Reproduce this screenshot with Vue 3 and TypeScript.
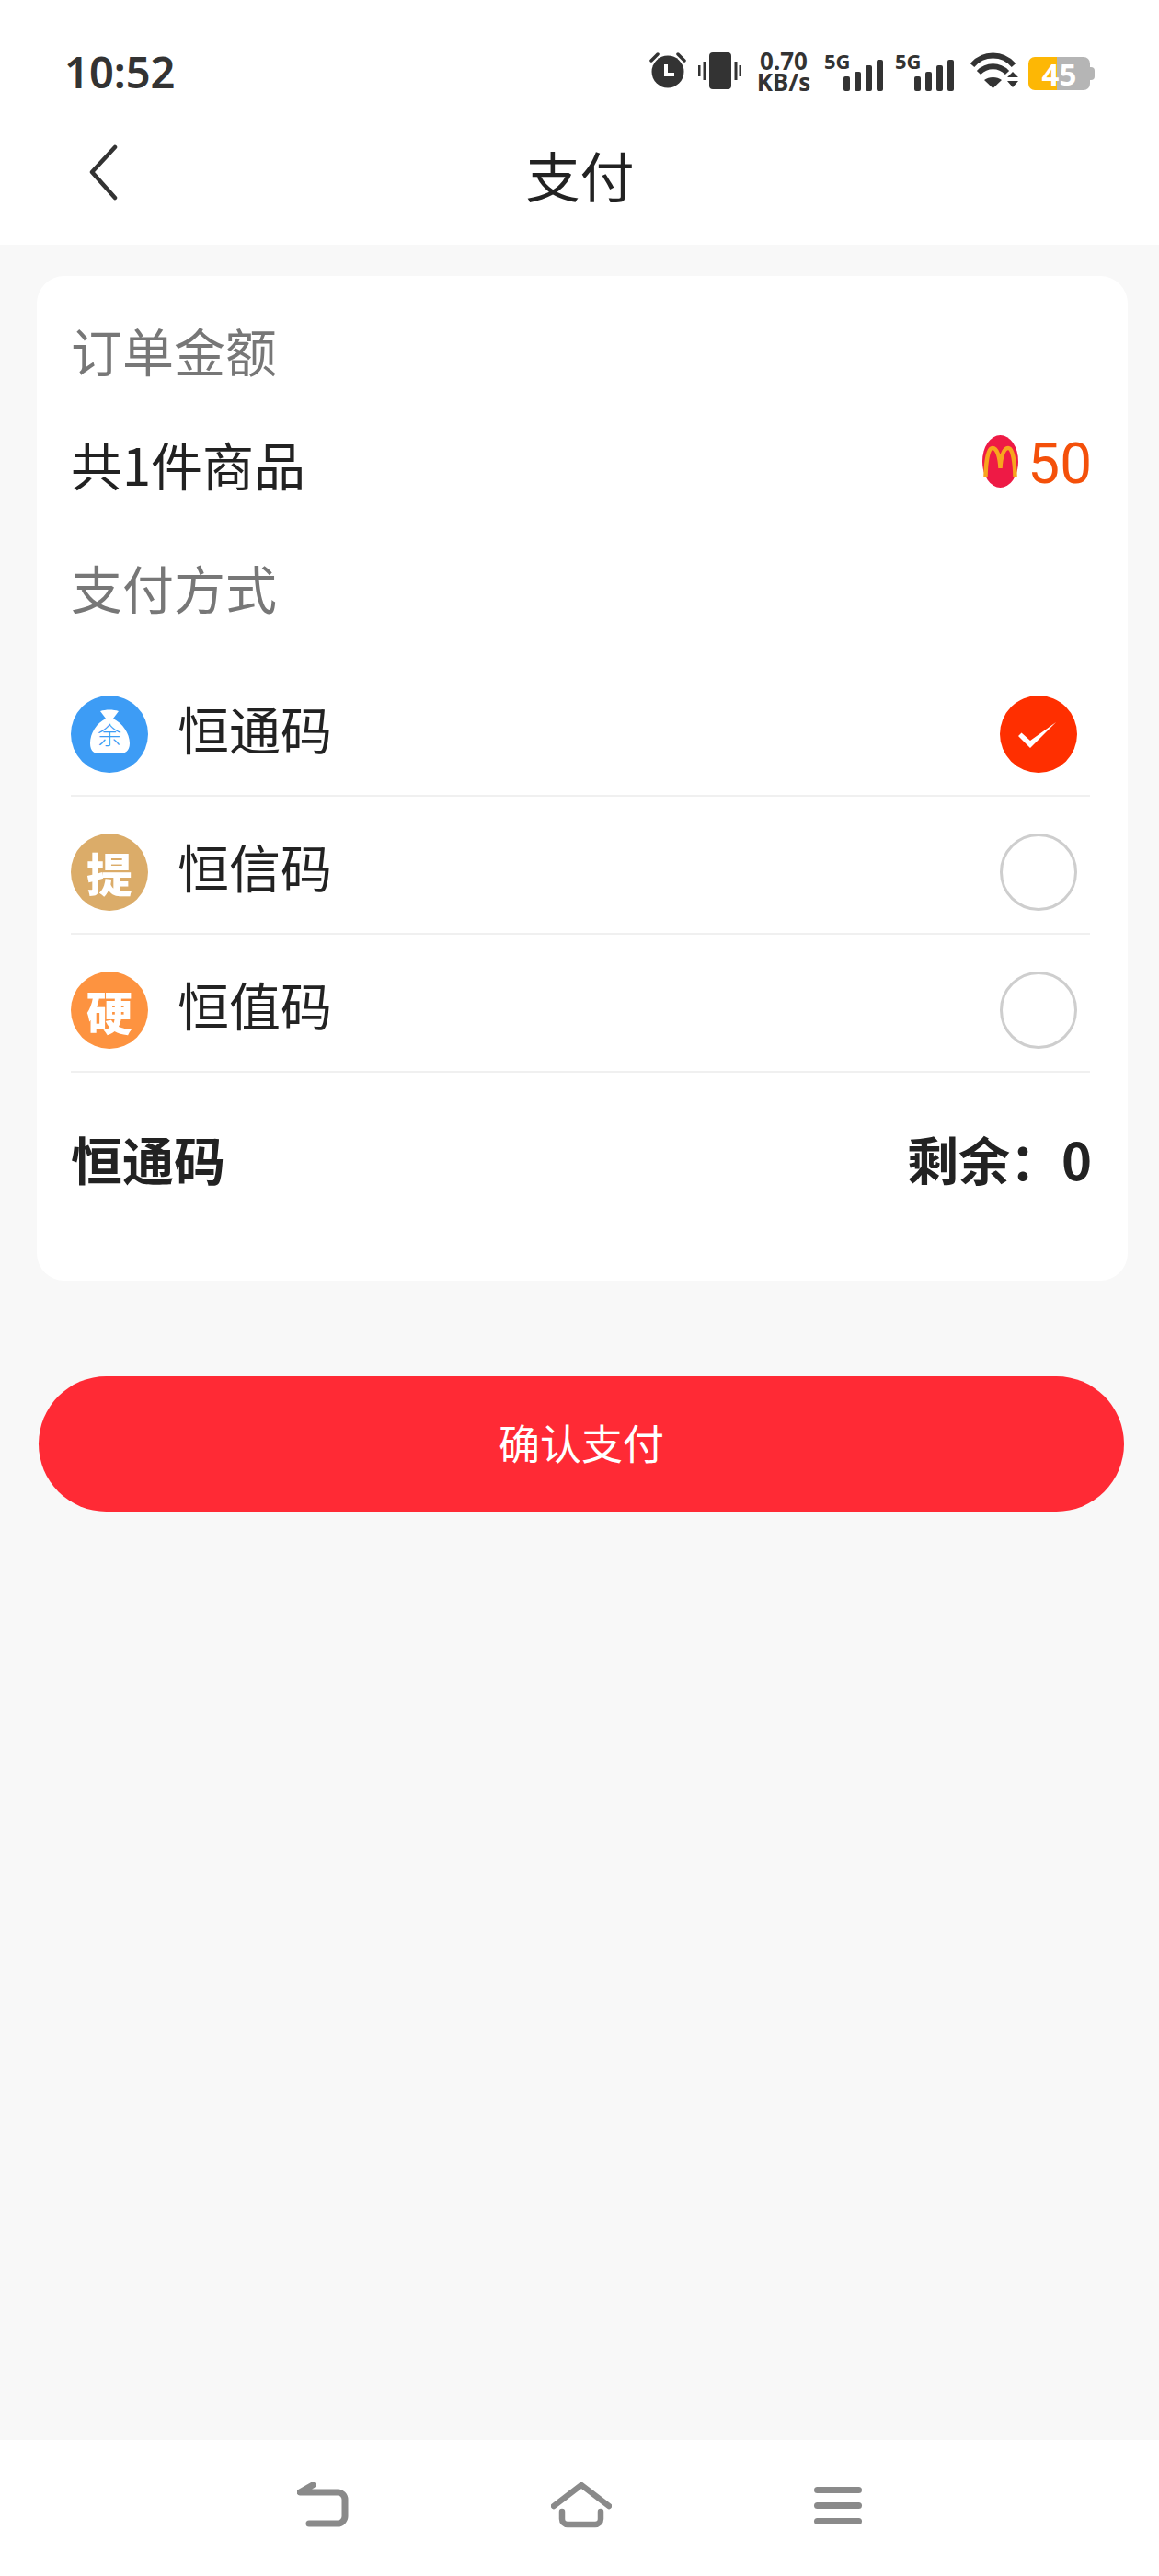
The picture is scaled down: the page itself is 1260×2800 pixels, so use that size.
<template>
  <div class="page">
    <header class="top">
      <div class="status">
        <span class="time">10:52</span>
        <div class="status-icons">
          <svg class="ic-alarm" width="40" height="39" viewBox="0 0 40 39">
            <circle cx="20" cy="21" r="17.5" fill="#333" />
            <path d="M2 9 9 2M38 9 31 2" stroke="#333" stroke-width="3.5" stroke-linecap="round" />
            <path d="M18 13v11h9" fill="none" stroke="#fff" stroke-width="4" />
          </svg>
          <svg class="ic-vibrate" width="47" height="40" viewBox="0 0 47 40">
            <rect x="12" y="0" width="24" height="40" rx="4" fill="#333" />
            <path d="M1 14v12M7 10v20M41 10v20M46 14v12" stroke="#333" stroke-width="3" />
          </svg>
          <div class="speed"><span>0.70</span><span>KB/s</span></div>
          <div v-for="n in 2" :key="n" class="signal">
            <span class="signal-label">5G</span>
            <i v-for="h in signalBars" :key="h" class="signal-bar" :style="{ height: h + 'px' }"></i>
          </div>
          <svg class="ic-wifi" width="52" height="39" viewBox="0 0 52 39">
            <path d="M2 14C14 0 35 0 47 14M9 22c9-9 22-9 31 0" fill="none" stroke="#333" stroke-width="6" />
            <path d="M15 30c5-4 14-4 19 0l-9.500 9z" fill="#333" />
            <path d="M46 21l6 6H40zM40 31h12l-6 7z" fill="#333" />
          </svg>
          <div class="battery"><span>45</span></div>
        </div>
      </div>
      <div class="nav-bar">
        <svg class="back" width="32" height="62" viewBox="0 0 32 62">
          <path d="M28 3 3 30l25 28" fill="none" stroke="#333" stroke-width="4.500" stroke-linecap="round" stroke-linejoin="round" />
        </svg>
        <h1>支付</h1>
      </div>
    </header>

    <main class="main">
      <section class="card">
        <div class="label">订单金额</div>
        <div class="order">
          <span>共1件商品</span>
          <span class="price">
            <svg width="39" height="57" viewBox="0 0 39 57">
              <ellipse cx="19.500" cy="28.500" rx="19.500" ry="28.500" fill="#ee1a45" />
              <path d="M3.500 45C4 24 7 14 11 14c5 0 8 10 8.500 22C20 24 23 14 28 14c4 0 7 10 7.500 31" fill="none" stroke="#f7a51e" stroke-width="4.500" />
            </svg>
            <b>50</b>
          </span>
        </div>
        <div class="label label-pay">支付方式</div>
        <ul class="methods">
          <li v-for="m in methods" :key="m.name" class="method">
            <span class="method-icon" :class="m.cls">
              <svg v-if="m.bag" width="84" height="84" viewBox="0 0 84 84">
                <path d="M32 17c6-2 14-2 20 0l-6 8c10 5 18 16 18 27 0 9-6 11-11 11-8-1-14-1-22 0-5 0-10-2-10-11 0-11 7-22 17-27z" fill="#fff" />
                <text x="42" y="53" text-anchor="middle" class="bag-text">余</text>
              </svg>
              <template v-else>{{ m.mark }}</template>
            </span>
            <span class="method-name">{{ m.name }}</span>
            <span v-if="m.checked" class="radio radio-on">
              <svg width="84" height="84" viewBox="0 0 84 84">
                <path d="M20 44l3.500-3.500L33 49l28-20-28 28z" fill="#fff" />
              </svg>
            </span>
            <span v-else class="radio"></span>
          </li>
        </ul>
        <div class="balance">
          <span>恒通码</span>
          <span>剩余：0</span>
        </div>
      </section>
      <button class="pay">确认支付</button>
    </main>

    <footer class="sys-nav">
      <svg width="56" height="50" viewBox="0 0 56 50">
        <path d="M17 3 3 11h41a8 8 0 0 1 8 8v18a8 8 0 0 1-8 8H13" fill="none" stroke="#8a8a8a" stroke-width="7" stroke-linecap="round" stroke-linejoin="round" />
      </svg>
      <svg width="66" height="50" viewBox="0 0 66 50">
        <path d="M3 26 33 3l30 23" fill="none" stroke="#8a8a8a" stroke-width="6.500" stroke-linecap="round" stroke-linejoin="round" />
        <path d="M12 32v8a6 6 0 0 0 6 6h30a6 6 0 0 0 6-6v-8" fill="none" stroke="#8a8a8a" stroke-width="6.500" stroke-linecap="round" />
      </svg>
      <div class="menu"><i></i><i></i><i></i></div>
    </footer>
  </div>
</template>

<script setup lang="ts">
interface PayMethod {
  name: string;
  cls: string;
  mark?: string;
  bag?: boolean;
  checked?: boolean;
}

const signalBars = [16, 21, 28, 34];

const methods: PayMethod[] = [
  { name: '恒通码', cls: 'blue', bag: true, checked: true },
  { name: '恒信码', cls: 'gold', mark: '提' },
  { name: '恒值码', cls: 'orange', mark: '硬' }
];
</script>

<style scoped>
.page {
  min-height: 2800px;
  display: flex;
  flex-direction: column;
  background: #f8f8f8;
  color: #222;
  font-family: "Noto Sans CJK SC", "Noto Sans", sans-serif;
}

.top {
  height: 266px;
  background: #fff;
}

.status {
  display: flex;
  justify-content: space-between;
  align-items: flex-start;
  height: 124px;
  padding: 50px 70px 0 70px;
  box-sizing: border-box;
}

.time {
  font-family: "Noto Sans", sans-serif;
  font-size: 47px;
  font-weight: 600;
  line-height: 56px;
  color: #333;
}

.status-icons {
  display: flex;
  align-items: flex-start;
  padding-top: 7px;
}

.ic-vibrate { margin-left: 13px; }
.ic-wifi { margin-left: 18px; }

.speed {
  display: flex;
  flex-direction: column;
  align-items: center;
  margin: -2px 0 0 19px;
  width: 54px;
  font-size: 26px;
  font-weight: 700;
  line-height: 23px;
  color: #333;
  font-family: "Noto Sans", sans-serif;
}

.signal {
  position: relative;
  display: flex;
  align-items: flex-end;
  justify-content: flex-end;
  gap: 5px;
  width: 64px;
  height: 42px;
  margin-left: 13px;
}

.speed + .signal { margin-left: 17px; }

.signal-label {
  position: absolute;
  left: 0;
  top: -2px;
  font-family: "Noto Sans", sans-serif;
  font-size: 22px;
  font-weight: 700;
  line-height: 22px;
  color: #333;
}

.signal-bar {
  width: 7px;
  border-radius: 2px;
  background: #333;
}

.battery {
  position: relative;
  display: flex;
  align-items: center;
  justify-content: center;
  width: 67px;
  height: 36px;
  margin: 5px 5px 0 11px;
  border-radius: 7px;
  background: linear-gradient(90deg, #fdb705 0 31px, #b5b5b5 31px);
  color: #fff;
  font-family: "Noto Sans", sans-serif;
  font-size: 33px;
  font-weight: 700;
}

.battery::after {
  content: "";
  position: absolute;
  right: -5px;
  top: 11px;
  width: 5px;
  height: 14px;
  border-radius: 0 4px 4px 0;
  background: #b5b5b5;
}

.nav-bar {
  position: relative;
  display: flex;
  justify-content: center;
  align-items: center;
  height: 134px;
}

.back {
  position: absolute;
  left: 97px;
  top: 33px;
}

h1 {
  margin: 0 0 2px 1px;
  font-size: 59px;
  font-weight: 400;
  line-height: 80px;
}

.main {
  flex: 1;
  padding: 34px 34px 0 40px;
}

.card {
  height: 1092px;
  padding: 40px 39px 0 37px;
  box-sizing: border-box;
  border-radius: 30px;
  background: #fff;
}

.label {
  font-size: 56px;
  line-height: 80px;
  color: #777;
}

.label-pay {
  margin-top: 54px;
}

.order {
  display: flex;
  justify-content: space-between;
  align-items: center;
  margin-top: 44px;
  font-size: 56px;
  line-height: 80px;
}

.price {
  display: flex;
  align-items: center;
  gap: 10px;
}

.price svg {
  margin-top: -6px;
}

.price b {
  font-family: Roboto, sans-serif;
  font-size: 62px;
  font-weight: 400;
  color: #f4500a;
}

.methods {
  margin: 38px 2px 0 0;
  padding: 0;
  list-style: none;
}

.method {
  display: flex;
  align-items: center;
  height: 150px;
  box-sizing: border-box;
  padding-top: 16px;
  border-bottom: 2px solid #f0f0f0;
}

.method-icon {
  display: flex;
  align-items: center;
  justify-content: center;
  width: 84px;
  height: 84px;
  border-radius: 50%;
  color: #fff;
  font-size: 50px;
  font-weight: 900;
  line-height: 1;
}

.blue { background: #3d9cf5; }
.gold { background: #dbac69; }
.orange { background: #fd9340; }

.bag-text {
  font-size: 26px;
  font-weight: 300;
  fill: #3d9cf5;
}

.method-name {
  flex: 1;
  margin: -14px 0 0 32px;
  font-size: 56px;
  line-height: 80px;
}

.radio {
  width: 84px;
  height: 84px;
  box-sizing: border-box;
  margin-right: 14px;
  border: 3px solid #cecece;
  border-radius: 50%;
}

.radio-on {
  border: 0;
  background: #ff2f00;
}

.balance {
  display: flex;
  justify-content: space-between;
  margin-top: 53px;
  font-size: 56px;
  font-weight: 700;
  line-height: 80px;
}

.pay {
  display: block;
  width: 1180px;
  height: 147px;
  margin: 104px 0 0 2px;
  padding: 0 0 4px;
  border: 0;
  border-radius: 74px;
  background: #ff2a35;
  color: #fff;
  font-family: inherit;
  font-size: 45px;
}

.sys-nav {
  display: flex;
  justify-content: center;
  align-items: center;
  gap: 220px;
  height: 148px;
  padding-bottom: 6px;
  box-sizing: border-box;
  background: #fff;
}

.menu {
  display: flex;
  flex-direction: column;
  gap: 10px;
  width: 52px;
}

.menu i {
  height: 7px;
  border-radius: 4px;
  background: #8a8a8a;
}
</style>
